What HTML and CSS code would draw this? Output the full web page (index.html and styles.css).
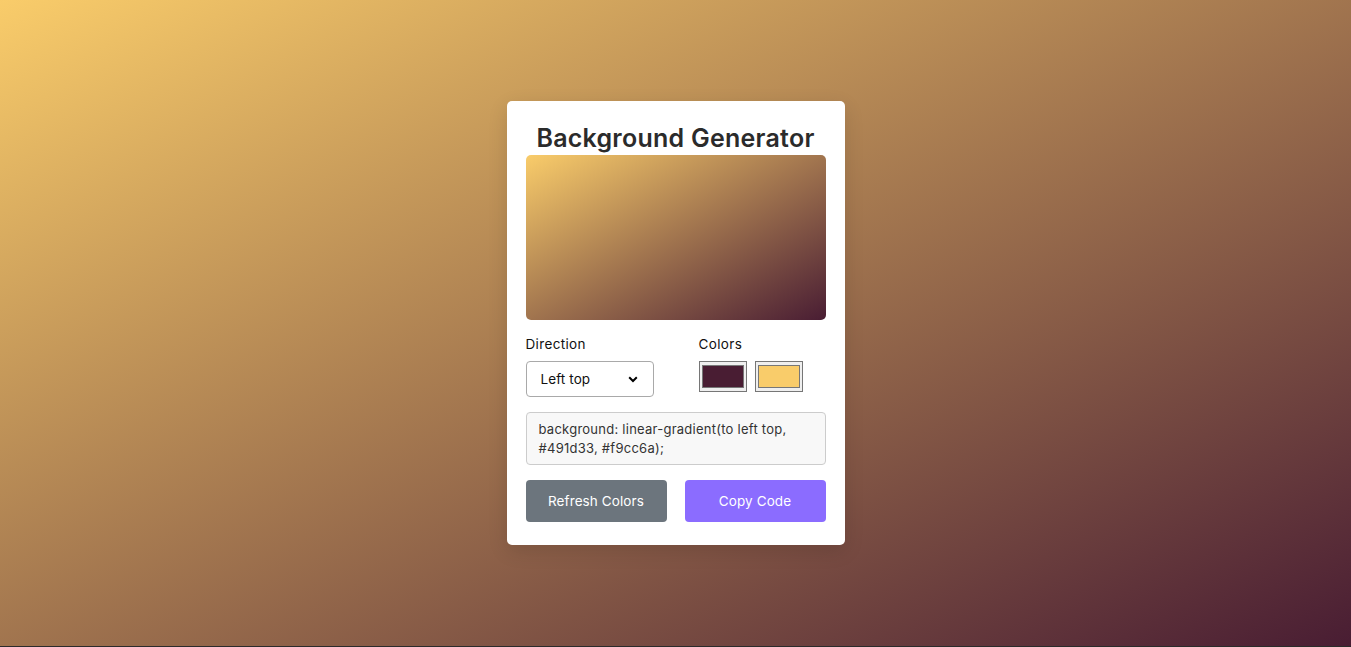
FILE: index.html
```html
<!DOCTYPE html>
<html lang="en">
<head>
<meta charset="utf-8">
<title>Background Generator</title>
<link rel="stylesheet" href="styles.css">
</head>
<body>
<main class="page">
  <section class="card">
    <h1 class="title">Background Generator</h1>
    <div class="preview"></div>
    <div class="controls">
      <div class="field">
        <label class="label" for="dir">Direction</label>
        <div class="select-wrap">
          <select id="dir" class="select">
            <option>Left top</option>
          </select>
          <svg class="chevron" width="10" height="7" viewBox="0 0 10 7"><path d="M1.2 1.3 L5 5 L8.8 1.3" fill="none" stroke="#000" stroke-width="2"/></svg>
        </div>
      </div>
      <div class="field">
        <span class="label">Colors</span>
        <div class="swatches">
          <span class="swatch"><span class="swatch-fill dark"></span></span>
          <span class="swatch"><span class="swatch-fill light"></span></span>
        </div>
      </div>
    </div>
    <div class="code">background: linear-gradient(to left top, #491d33, #f9cc6a);</div>
    <div class="buttons">
      <button class="btn btn-grey">Refresh Colors</button>
      <button class="btn btn-purple">Copy Code</button>
    </div>
  </section>
</main>
</body>
</html>
```
FILE: styles.css
```css
* { box-sizing: border-box; }
html { background: #2b2b2b; }
body {
  margin: 0;
  font-family: Inter, "Open Sans", sans-serif;
}
.page {
  height: 646px;
  background: linear-gradient(to left top, #491d33, #f9cc6a);
  display: flex;
  align-items: center;
  justify-content: center;
}
.card {
  width: 338px;
  background: #fff;
  border-radius: 5px;
  padding: 20px 19px 23px;
  box-shadow: 0 6px 20px rgba(0,0,0,0.12);
}
.title {
  margin: 0;
  text-align: center;
  font-size: 25px;
  font-weight: 600;
  line-height: 34px;
  color: #2b2b2b;
  letter-spacing: 0.25px;
}
.preview {
  height: 165px;
  border-radius: 5px;
  background: linear-gradient(to left top, #491d33, #f9cc6a);
}
.controls {
  display: grid;
  grid-template-columns: 173px 1fr;
  margin-top: 14px;
}
.label {
  display: block;
  font-size: 13.5px;
  letter-spacing: 0.35px;
  line-height: 20px;
  color: #111;
  margin-bottom: 7px;
}
.select-wrap {
  position: relative;
  width: 128px;
}
.select {
  appearance: none;
  -webkit-appearance: none;
  width: 128px;
  height: 36px;
  border: 1px solid #a9a9a9;
  border-radius: 4px;
  background: #fff;
  padding: 0 14px;
  font-family: inherit;
  font-size: 13.5px;
  letter-spacing: 0.1px;
  color: #111;
}
.chevron {
  position: absolute;
  right: 16px;
  top: 15px;
  pointer-events: none;
}
.swatches {
  display: flex;
  gap: 8px;
}
.swatch {
  width: 48px;
  height: 31px;
  background: #efefef;
  border: 1px solid #767676;
  padding: 3px 2px;
  display: flex;
}
.swatch-fill {
  flex: 1;
  border: 1px solid #777;
}
.dark { background: #491d33; }
.light { background: #f9cc6a; }
.code {
  margin-top: 15px;
  background: #f8f8f8;
  border: 1px solid #ccc;
  border-radius: 4px;
  padding: 7px 12px 6px;
  font-size: 13px;
  letter-spacing: 0.25px;
  line-height: 19px;
  color: #333;
}
.buttons {
  display: grid;
  grid-template-columns: 1fr 1fr;
  gap: 18px;
  margin-top: 15px;
}
.btn {
  height: 42px;
  border: none;
  border-radius: 4px;
  color: #fff;
  font-family: inherit;
  font-size: 13.5px;
  letter-spacing: 0.1px;
}
.btn-grey { background: #6c757d; }
.btn-purple { background: #8b6cff; }
```
